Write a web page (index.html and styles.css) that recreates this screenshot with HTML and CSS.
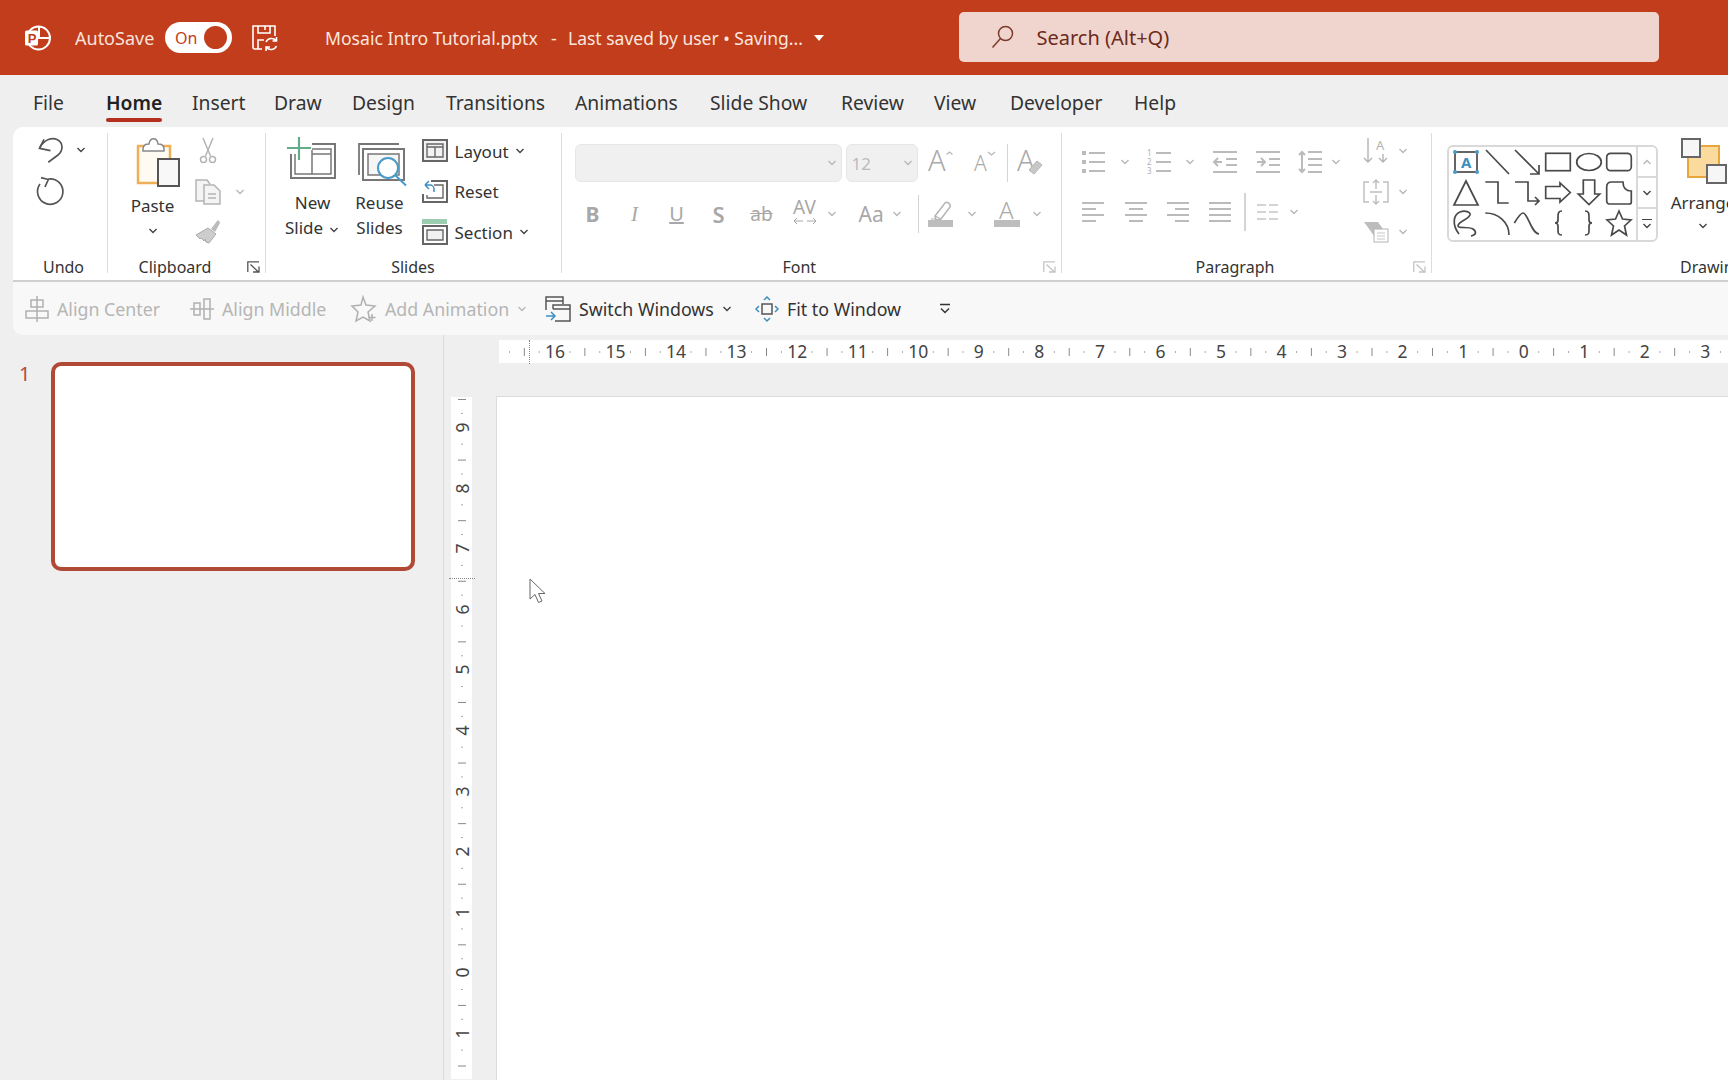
FILE: index.html
```html
<!DOCTYPE html>
<html lang="en">

<head>
    <meta charset="UTF-8">
    <title>Mosaic Intro Tutorial.pptx</title>
    <link rel="stylesheet" href="styles.css">
</head>

<body>
    <svg class="sprite" width="0" height="0">
        <symbol id="chev" viewBox="0 0 12 8"><path d="M2.5 2l3.5 3.5L9.5 2" fill="none" stroke="currentColor" stroke-width="1.4"/></symbol>
        <symbol id="launch" viewBox="0 0 13 12"><path d="M.8 11V.8H12M3.5 3.5l8 7.5M6 11h6V5.5" fill="none" stroke="currentColor" stroke-width="1.3"/></symbol>
        <symbol id="lines-left" viewBox="0 0 24 24"><path d="M1 3h22M1 9h14M1 15h22M1 21h14" fill="none" stroke="currentColor" stroke-width="2"/></symbol>
        <symbol id="lines-center" viewBox="0 0 24 24"><path d="M1 3h22M5 9h14M1 15h22M5 21h14" fill="none" stroke="currentColor" stroke-width="2"/></symbol>
        <symbol id="lines-right" viewBox="0 0 24 24"><path d="M1 3h22M9 9h14M1 15h22M9 21h14" fill="none" stroke="currentColor" stroke-width="2"/></symbol>
        <symbol id="lines-full" viewBox="0 0 24 24"><path d="M1 3h22M1 9h22M1 15h22M1 21h22" fill="none" stroke="currentColor" stroke-width="2"/></symbol>
    </svg>

    <header class="titlebar">
        <svg class="logo" width="26" height="26" viewBox="0 0 26 26">
            <circle cx="13.5" cy="13" r="11.5" fill="none" stroke="#fff" stroke-width="2"/>
            <path d="M14 1.5V13h11" fill="none" stroke="#fff" stroke-width="2"/>
            <rect x="0" y="5.5" width="13" height="15" rx="1.5" fill="#fff"/>
            <text x="2.8" y="17.5" class="logo-p">P</text>
        </svg>
        <span class="autosave">AutoSave</span>
        <span class="toggle"><span>On</span><i></i></span>
        <svg class="saveicon" width="26" height="26" viewBox="0 0 26 26" fill="none" stroke="#fff" stroke-width="1.6">
            <path d="M10 24H3a2 2 0 0 1-2-2V1h22v10"/>
            <path d="M6 1v7h12V1M13 1v4M6 24v-9h6"/>
            <path d="M14 17a6 6 0 0 1 10-1.5M24.5 21a6 6 0 0 1-10 1.5M24.5 12v4h-4M14 26v-4h4"/>
        </svg>
        <span class="docname">Mosaic Intro Tutorial.pptx</span>
        <span class="docdash">-</span>
        <span class="docstate">Last saved by user • Saving...</span>
        <span class="caret"></span>
        <div class="search">
            <svg width="24" height="24" viewBox="0 0 24 24" fill="none" stroke="#7c3a2a" stroke-width="1.5">
                <circle cx="14.5" cy="8.5" r="7"/>
                <path d="M9.5 13.5L1.5 22.5"/>
            </svg>
            <span>Search (Alt+Q)</span>
        </div>
    </header>

    <nav class="tabs">
        <a>File</a>
        <a class="valgt">Home</a>
        <a>Insert</a>
        <a>Draw</a>
        <a>Design</a>
        <a>Transitions</a>
        <a>Animations</a>
        <a>Slide Show</a>
        <a>Review</a>
        <a>View</a>
        <a>Developer</a>
        <a>Help</a>
    </nav>

    <section class="ribbon">
        <div class="group undo">
            <div class="body undo-body">
                <div class="undo-row">
                    <svg width="26" height="28" viewBox="0 0 26 28" fill="none" stroke="#555" stroke-width="1.7">
                        <path d="M7 3.3L2.5 12.3l11 2.4"/>
                        <path d="M3 11C8 3 15 1.5 20 3.5c7 3.5 6 11.5 1 15.5L11.3 26.3"/>
                    </svg>
                    <svg class="chev dark"><use href="#chev"/></svg>
                </div>
                <svg class="redo" width="28" height="28" viewBox="0 0 28 28" fill="none" stroke="#555" stroke-width="1.7">
                    <path d="M12.3 2A12.7 12.7 0 1 1 4 7"/>
                    <path d="M5 .7L12.3 2.5 9 10"/>
                </svg>
            </div>
            <div class="label">Undo</div>
        </div>

        <div class="group clipboard">
            <div class="body clip-body">
                <div class="big paste">
                    <svg width="60" height="57" viewBox="0 0 60 57">
                        <rect x="15" y="13" width="32" height="37" fill="#fffaf2" stroke="#eeb057" stroke-width="2.5"/>
                        <path d="M20 16c0-4 3-5 6-5 1-7 8-7 9 0 3 0 6 1 6 5v2H20z" fill="#fff" stroke="#888" stroke-width="1.5"/>
                        <rect x="35" y="26" width="21" height="27" fill="#f8f8f8" stroke="#555" stroke-width="2"/>
                    </svg>
                    <span>Paste</span>
                    <svg class="chev dark"><use href="#chev"/></svg>
                </div>
                <div class="stack clip-tools">
                    <svg width="26" height="26" viewBox="0 0 26 26" fill="none" stroke="#b4b4b4" stroke-width="1.5">
                        <path d="M8 0l7.5 18M18 0l-7.5 18"/>
                        <circle cx="8.5" cy="21.5" r="3"/>
                        <circle cx="17.5" cy="21.5" r="3"/>
                    </svg>
                    <div class="copy-row">
                        <svg width="26" height="26" viewBox="0 0 26 26" fill="#f4f4f4" stroke="#b4b4b4" stroke-width="1.5">
                            <path d="M9 22H1V1h11l3 4"/>
                            <path d="M9 6h10l6 6v13H9z"/>
                            <path d="M13 15h8M13 19h8"/>
                        </svg>
                        <svg class="chev"><use href="#chev"/></svg>
                    </div>
                    <svg width="26" height="26" viewBox="0 0 26 26">
                        <path d="M16 10l6-8c1-1 3 0 3 2l-5 9z" fill="#bbb"/>
                        <path d="M13 9l8 6-7 9-3-1-1-3-1 2-3-3-1 1-4-4z" fill="#cdcdcd" stroke="#aaa"/>
                    </svg>
                </div>
            </div>
            <div class="label">Clipboard</div>
            <svg class="launch"><use href="#launch"/></svg>
        </div>

        <div class="group slides">
            <div class="body slides-body">
                <div class="big">
                    <svg width="60" height="57" viewBox="0 0 60 57" fill="none">
                        <path d="M8 21V45H52V11H29" stroke="#777" stroke-width="2"/>
                        <path d="M12 21V41H48V16H29M29 17V41M29 21H48" stroke="#777" stroke-width="1.5"/>
                        <path d="M16 4v23M4 15h24" stroke="#62ad8a" stroke-width="2.2"/>
                    </svg>
                    <span class="newslide">New<br>Slide<svg class="chev dark"><use href="#chev"/></svg></span>
                </div>
                <div class="big">
                    <svg width="60" height="57" viewBox="0 0 60 57" fill="none">
                        <path d="M9 42V11H49" stroke="#777" stroke-width="1.8"/>
                        <path d="M13 47V16H54V47z" stroke="#777" stroke-width="2"/>
                        <path d="M18 42V21H49V42z" fill="#f6f6f6" stroke="#777" stroke-width="1.5"/>
                        <circle cx="38" cy="35" r="10" fill="#fff" stroke="#4a9ac9" stroke-width="2"/>
                        <path d="M45 42l11 10.5" stroke="#4a9ac9" stroke-width="2"/>
                    </svg>
                    <span>Reuse<br>Slides</span>
                </div>
                <div class="stack slide-tools">
                    <div class="tool">
                        <svg width="26" height="24" viewBox="0 0 26 24" fill="#f2f2f2" stroke="#666">
                            <rect x="1" y="1" width="24" height="21" stroke-width="2"/>
                            <path d="M5 5h16v13H5zM5 8h16M13 8v10" stroke-width="1.4"/>
                        </svg>
                        <span>Layout</span><svg class="chev dark"><use href="#chev"/></svg>
                    </div>
                    <div class="tool">
                        <svg width="26" height="24" viewBox="0 0 26 24" fill="none" stroke="#666">
                            <path d="M9 1h16v21H1v-8" stroke-width="2"/>
                            <path d="M12 5h9v13H5v-3" stroke-width="1.4"/>
                            <path d="M3 5l4-4M3 5l4 4M3 5h5a4 4 0 0 1 4 4v3" stroke="#3d8fc0" stroke-width="1.5"/>
                        </svg>
                        <span>Reset</span>
                    </div>
                    <div class="tool">
                        <svg width="26" height="26" viewBox="0 0 26 26" fill="none" stroke="#666">
                            <rect x="0" y="0" width="25" height="5" fill="#9bcdb0" stroke="none"/>
                            <path d="M1 7h24v18H1z" stroke-width="2"/>
                            <path d="M5 11h16v10H5z" fill="#f2f2f2" stroke-width="1.4"/>
                        </svg>
                        <span>Section</span><svg class="chev dark"><use href="#chev"/></svg>
                    </div>
                </div>
            </div>
            <div class="label">Slides</div>
        </div>

        <div class="group font">
            <div class="body">
                <div class="font-row1">
                    <div class="select fontname"><svg class="chev"><use href="#chev"/></svg></div>
                    <div class="select fontsize"><span>12</span><svg class="chev"><use href="#chev"/></svg></div>
                    <svg width="26" height="26" viewBox="0 0 26 26" fill="none" stroke="#b8b8b8" stroke-width="1.3">
                        <text x="0" y="21" class="lightA big-a">A</text>
                        <path d="M18.5 4.5L21.5 2l3 2.5"/>
                    </svg>
                    <svg width="26" height="26" viewBox="0 0 26 26" fill="none" stroke="#b8b8b8" stroke-width="1.3">
                        <text x="0" y="21" class="lightA small-a">A</text>
                        <path d="M14 2l3.5 3L21 2"/>
                    </svg>
                    <span class="sep"></span>
                    <svg width="26" height="26" viewBox="0 0 26 26">
                        <text x="0" y="21" class="lightA big-a">A</text>
                        <path d="M12 20l8-9 5 4-8 9z" fill="#c8c8c8" stroke="#b4b4b4"/>
                    </svg>
                </div>
                <div class="font-row2">
                    <span class="fmt bold">B</span>
                    <span class="fmt ital">I</span>
                    <span class="fmt under">U</span>
                    <span class="fmt shadow">S</span>
                    <span class="fmt strike">ab</span>
                    <span class="fmt av">AV<svg width="24" height="8" viewBox="0 0 24 8" fill="none" stroke="currentColor"><path d="M1 4h9M1 4l3-3M1 4l3 3M14 4h9M23 4l-3-3M23 4l-3 3"/></svg></span>
                    <svg class="chev"><use href="#chev"/></svg>
                    <span class="fmt case">Aa</span>
                    <svg class="chev"><use href="#chev"/></svg>
                    <span class="sep row2sep"></span>
                    <svg width="26" height="28" viewBox="0 0 26 28" fill="none" stroke="#b4b4b4" stroke-width="1.5">
                        <path d="M7 16L17 3c2-2 6 1 5 4L13 19l-5 1z"/>
                        <path d="M7 16l6 3M3 19h5" stroke-width="1.2"/>
                        <rect x="0" y="20" width="25" height="7" fill="#bdbdbd" stroke="none"/>
                    </svg>
                    <svg class="chev"><use href="#chev"/></svg>
                    <svg width="26" height="28" viewBox="0 0 26 28">
                        <text x="5" y="19" class="lightA color-a">A</text>
                        <rect x="0" y="20" width="26" height="7" fill="#bdbdbd"/>
                    </svg>
                    <svg class="chev"><use href="#chev"/></svg>
                </div>
            </div>
            <div class="label">Font</div>
            <svg class="launch faint"><use href="#launch"/></svg>
        </div>

        <div class="group paragraph">
            <div class="body para-body">
                <div>
                    <div class="para-row1">
                        <svg class="para-icon" viewBox="0 0 24 24" fill="none" stroke="#bbb" stroke-width="2"><path d="M8 3h16M8 12h16M8 21h16"/><path d="M1 3h4M1 12h4M1 21h4" stroke-width="4"/></svg>
                        <svg class="chev"><use href="#chev"/></svg>
                        <svg class="para-icon" viewBox="0 0 24 24" fill="none" stroke="#bbb" stroke-width="2"><path d="M9 3h15M9 12h15M9 21h15"/><text x="0" y="6" class="listnum">1</text><text x="0" y="15" class="listnum">2</text><text x="0" y="24" class="listnum">3</text></svg>
                        <svg class="chev"><use href="#chev"/></svg>
                        <svg class="para-icon" viewBox="0 0 24 24" fill="none" stroke="#bbb" stroke-width="2"><path d="M0 2h24M13 9h11M13 15h11M0 22h24M9 12H1M5 8l-4 4 4 4"/></svg>
                        <svg class="para-icon" viewBox="0 0 24 24" fill="none" stroke="#bbb" stroke-width="2"><path d="M0 2h24M13 9h11M13 15h11M0 22h24M1 12h8M5 8l4 4-4 4"/></svg>
                        <svg class="para-icon" viewBox="0 0 24 24" fill="none" stroke="#bbb" stroke-width="2"><path d="M10 2h14M10 9h14M10 15h14M10 22h14M4 2v20M1 5l3-3 3 3M1 19l3 3 3-3"/></svg>
                        <svg class="chev"><use href="#chev"/></svg>
                    </div>
                    <div class="para-row2">
                        <svg class="para-icon" color="#bbb"><use href="#lines-left"/></svg>
                        <svg class="para-icon" color="#bbb"><use href="#lines-center"/></svg>
                        <svg class="para-icon" color="#bbb"><use href="#lines-right"/></svg>
                        <svg class="para-icon" color="#bbb"><use href="#lines-full"/></svg>
                        <span class="sep row2sep"></span>
                        <svg class="para-icon cols" viewBox="0 0 24 24" fill="none" stroke="#c6c6c6" stroke-width="1.6"><path d="M2 5h9M14 5h9M2 12h9M14 12h9M2 19h9M14 19h9"/></svg>
                        <svg class="chev"><use href="#chev"/></svg>
                    </div>
                </div>
                <div class="stack para-tools">
                    <div class="copy-row">
                        <svg width="26" height="26" viewBox="0 0 26 26" fill="none" stroke="#b4b4b4" stroke-width="1.4"><path d="M5 0v24M1 20l4 4 4-4M20 16v8M16 20l4 4 4-4"/><text x="13" y="12" class="dirA">A</text></svg>
                        <svg class="chev"><use href="#chev"/></svg>
                    </div>
                    <div class="copy-row">
                        <svg width="26" height="26" viewBox="0 0 26 26" fill="none" stroke="#c0c0c0" stroke-width="1.5"><path d="M6 3H1v20h5M20 3h5v20h-5M13 1v9M10 4l3-3 3 3M13 25v-9M10 22l3 3 3-3M7 13h12"/></svg>
                        <svg class="chev"><use href="#chev"/></svg>
                    </div>
                    <div class="copy-row">
                        <svg width="26" height="26" viewBox="0 0 26 26"><path d="M1 3h14l5 7-8 8z" fill="#bdbdbd"/><rect x="11" y="10" width="14" height="13" fill="#fff" stroke="#b4b4b4"/><path d="M14 14h8M14 17h8M14 20h8" stroke="#c6c6c6"/></svg>
                        <svg class="chev"><use href="#chev"/></svg>
                    </div>
                </div>
            </div>
            <div class="label">Paragraph</div>
            <svg class="launch faint"><use href="#launch"/></svg>
        </div>

        <div class="group drawing">
            <div class="body drawing-body">
                <div class="gallery">
                    <div class="shapes">
                        <svg viewBox="0 0 26 26"><rect x="2" y="3" width="22" height="20"/><text x="8" y="19" class="shapeA">A</text><g class="handles"><circle cx="2" cy="3" r="2"/><circle cx="24" cy="3" r="2"/><circle cx="2" cy="23" r="2"/><circle cx="24" cy="23" r="2"/></g></svg>
                        <svg viewBox="0 0 26 26"><path d="M2 1l23 24"/></svg>
                        <svg viewBox="0 0 26 26"><path d="M1 1l24 24M25 16v9h-9"/></svg>
                        <svg viewBox="0 0 26 26"><rect x=".7" y="4.3" width="24.6" height="17.4"/></svg>
                        <svg viewBox="0 0 26 26"><ellipse cx="13" cy="13" rx="12.3" ry="8.5"/></svg>
                        <svg viewBox="0 0 26 26"><rect x=".7" y="4.3" width="24.6" height="17.4" rx="4"/></svg>
                        <svg viewBox="0 0 26 26"><path d="M13 1L1 25h24z"/></svg>
                        <svg viewBox="0 0 26 26"><path d="M1.3 2H14V23H24.7"/></svg>
                        <svg viewBox="0 0 26 26"><path d="M1 2H14V21H25M21 17l4 4-4 4"/></svg>
                        <svg viewBox="0 0 26 26"><path d="M.7 6.5H15V3l10.3 9.5L15 22v-3.5H.7z"/></svg>
                        <svg viewBox="0 0 26 26"><path d="M7.3 0H18.7V14H23.7L13 24.5 2.3 14H7.3z"/></svg>
                        <svg viewBox="0 0 26 26"><path d="M.7 21V7c0-3 2-5 5-5H17c0 6 3 9 8.3 9v11c0 1-1 2-2 2H3c-1 0-2.3-1-2.3-3z"/></svg>
                        <svg viewBox="0 0 26 26"><path d="M6 24C-1 15 0 5 7 2c5-2 11 0 10 3-2 5-12 6-12 11 0 3 10 0 15 3 4 3 3 6-2 7"/></svg>
                        <svg viewBox="0 0 26 26"><path d="M1.3 3C14 3 25 12 25 25"/></svg>
                        <svg viewBox="0 0 26 26"><path d="M.3 13C4 7 7 3 9 3c5 0 8 20 16 21"/></svg>
                        <svg viewBox="0 0 26 26"><path d="M17 1c-4 0-4 3-4 6v3c0 2-1 3-3 3 2 0 3 1 3 3v4c0 3 0 5 4 5"/></svg>
                        <svg viewBox="0 0 26 26"><path d="M9 1c4 0 4 3 4 6v3c0 2 1 3 3 3-2 0-3 1-3 3v4c0 3 0 5-4 5"/></svg>
                        <svg viewBox="0 0 26 26"><path d="M13 1l3.5 8 8.5 1-6.5 6 2 9-7.5-5-7.5 5 2-9L1 10l8.5-1z"/></svg>
                    </div>
                    <div class="scroller">
                        <span><svg class="chev flip"><use href="#chev"/></svg></span>
                        <span><svg class="chev dark"><use href="#chev"/></svg></span>
                        <span class="more"><i></i><svg class="chev dark"><use href="#chev"/></svg></span>
                    </div>
                </div>
                <div class="big arrange">
                    <svg width="60" height="57" viewBox="0 0 60 57">
                        <rect x="15" y="13" width="31" height="31" fill="#fadb9d" stroke="#e8a63c" stroke-width="2"/>
                        <rect x="9" y="6" width="18" height="18" fill="#f6f6f6" stroke="#666" stroke-width="2"/>
                        <rect x="34" y="32" width="19" height="18" fill="#f6f6f6" stroke="#666" stroke-width="2"/>
                    </svg>
                    <span>Arrange</span>
                    <svg class="chev dark"><use href="#chev"/></svg>
                </div>
            </div>
            <div class="label">Drawing</div>
        </div>
    </section>

    <section class="qat">
        <div class="qat-item off">
            <svg width="24" height="26" viewBox="0 0 24 26" fill="none" stroke="#b0b0b0" stroke-width="1.5"><path d="M12 0v26M6 4h12v7H6zM1 15h22v7H1z"/></svg>
            <span>Align Center</span>
        </div>
        <div class="qat-item off">
            <svg width="24" height="26" viewBox="0 0 24 26" fill="none" stroke="#b0b0b0" stroke-width="1.5"><path d="M0 13h24M4 7h6v12H4zM14 3h6v20h-6z"/></svg>
            <span>Align Middle</span>
        </div>
        <div class="qat-item off">
            <svg width="26" height="26" viewBox="0 0 26 26" fill="none" stroke="#b0b0b0" stroke-width="1.5"><path d="M12 1l3 8 9 1-7 6 2 9-7-4-7 4 2-9-6-6 9-1z"/><path d="M21 18v7M17.5 21.5h7"/></svg>
            <span>Add Animation</span>
            <svg class="chev"><use href="#chev"/></svg>
        </div>
        <div class="qat-item">
            <svg width="26" height="26" viewBox="0 0 26 26" fill="none" stroke="#555" stroke-width="1.5"><path d="M1 14V1h17v7M1 5h17"/><path d="M8 13V9h17v16H10M8 13h17"/><path d="M1 20h9M6 16l4 4-4 4" stroke="#3d8fc0"/></svg>
            <span>Switch Windows</span>
            <svg class="chev dark"><use href="#chev"/></svg>
        </div>
        <div class="qat-item">
            <svg width="24" height="26" viewBox="0 0 24 26" fill="none" stroke="#3d8fc0" stroke-width="1.5"><rect x="7" y="8" width="10" height="10" stroke="#555"/><path d="M9 4l3-3 3 3M9 22l3 3 3-3M4 10l-3 3 3 3M20 10l3 3-3 3"/></svg>
            <span>Fit to Window</span>
        </div>
        <svg class="overflow" width="12" height="12" viewBox="0 0 12 12" fill="none" stroke="#333" stroke-width="1.4"><path d="M1 1.5h10M2 5.5l4 4 4-4"/></svg>
    </section>

    <main class="workspace">
        <aside class="thumbs">
            <span class="num">1</span>
            <div class="thumb"></div>
        </aside>
        <div class="editor">
            <div class="ruler-h">
                <span>16</span><span>15</span><span>14</span><span>13</span><span>12</span><span>11</span><span>10</span><span>9</span><span>8</span><span>7</span><span>6</span><span>5</span><span>4</span><span>3</span><span>2</span><span>1</span><span>0</span><span>1</span><span>2</span><span>3</span>
                <i class="marker-h"></i>
            </div>
            <div class="editor-row">
                <div class="ruler-v">
                    <span>9</span><span>8</span><span>7</span><span>6</span><span>5</span><span>4</span><span>3</span><span>2</span><span>1</span><span>0</span><span>1</span>
                    <i class="marker-v"></i>
                </div>
                <div class="slide">
                    <svg class="cursor" width="18" height="26" viewBox="0 0 18 26"><path d="M1 1v20l5-4.5 3.5 8 3.5-1.5-3.5-7.5H16z" fill="#fff" stroke="#666" stroke-width="1"/></svg>
                </div>
            </div>
        </div>
    </main>
</body>

</html>
```

FILE: styles.css
```css
* {
    box-sizing: border-box;
}

html,
body {
    margin: 0;
    width: 1728px;
    height: 1080px;
    overflow: hidden;
}

body {
    background: #efefef;
    color: #333;
    font-family: "Noto Sans", "Open Sans", sans-serif;
    font-size: 17px;
}

svg {
    display: block;
    flex: none;
    overflow: visible;
}

.sprite {
    position: absolute;
}

/* title bar */
.titlebar {
    display: flex;
    align-items: center;
    height: 75px;
    padding-left: 25px;
    background: #c13d1b;
    color: #fff;
    font-size: 18px;
}

.logo-p {
    font: bold 13px "Liberation Sans", sans-serif;
    fill: #c13d1b;
}

.autosave {
    width: 90px;
    margin-left: 24px;
    color: #f9e3dc;
}

.toggle {
    display: flex;
    align-items: center;
    justify-content: space-between;
    width: 67px;
    height: 31px;
    padding: 0 5px 0 10px;
    border-radius: 16px;
    background: #fff;
    color: #c13d1b;
    font-size: 16px;
}

.toggle i {
    width: 23px;
    height: 23px;
    border-radius: 50%;
    background: #c13d1b;
}

.saveicon {
    margin-left: 20px;
}

.docname {
    width: 226px;
    margin-left: 47px;
    color: #fbe6df;
    font-size: 17.6px;
    white-space: nowrap;
}

.docdash {
    width: 17px;
    color: #fbe6df;
}

.docstate {
    width: 246px;
    color: #fbe6df;
    font-size: 17.5px;
    white-space: nowrap;
}

.caret {
    width: 0;
    height: 0;
    border: 5px solid transparent;
    border-top: 6px solid #fff;
    border-bottom: 0;
}

.search {
    display: flex;
    align-items: center;
    gap: 22px;
    width: 700px;
    height: 50px;
    margin-left: 134.5px;
    margin-top: -0.5px;
    padding-left: 32px;
    border-radius: 5px;
    background: #f0d5ce;
    color: #6b2a1c;
    font-size: 20px;
}

/* tabs */
.tabs {
    display: grid;
    grid-template-columns: 73px 86px 82px 78px 94px 129px 135px 131px 93px 76px 124px 60px;
    align-items: center;
    height: 52px;
    padding: 2px 0 0 33px;
    font-size: 19.3px;
}

.tabs a {
    position: relative;
    white-space: nowrap;
    justify-self: start;
}

.valgt {
    font-weight: 600;
    color: #222;
}

.valgt::after {
    content: "";
    position: absolute;
    left: 0;
    right: 0;
    bottom: -6px;
    height: 3.5px;
    border-radius: 2px;
    background: #b5301c;
}

/* ribbon */
.ribbon {
    display: flex;
    height: 155px;
    margin-left: 13px;
    padding-top: 6px;
    overflow: hidden;
    border-top-left-radius: 10px;
    border-bottom: 2px solid #cfd0d0;
    background: #fff;
}

.group {
    position: relative;
    display: flex;
    flex: none;
    flex-direction: column;
    height: 140px;
    border-right: 1.5px solid #dcdcdc;
}

.body {
    flex: 1;
}

.label {
    height: 10px;
    line-height: 8px;
    font-size: 16px;
    text-align: center;
    white-space: nowrap;
}

.launch {
    position: absolute;
    right: 5px;
    bottom: 0;
    width: 13px;
    height: 12px;
    color: #555;
}

.launch.faint {
    color: #c4c4c4;
}

.chev {
    width: 12px;
    height: 8px;
    color: #b8b8b8;
}

.chev.dark {
    color: #444;
}

.chev.flip {
    transform: scaleY(-1);
}

.sep {
    display: block;
    width: 1.5px;
    height: 38px;
    background: #d4d4d4;
}

.big {
    display: flex;
    flex: none;
    flex-direction: column;
    align-items: center;
    width: 60px;
    line-height: 25px;
    text-align: center;
}

.stack {
    display: grid;
    grid-auto-rows: 40.5px;
    align-items: center;
    margin-top: -2px;
}

.tool,
.copy-row {
    display: flex;
    align-items: center;
}

/* undo */
.undo {
    width: 95px;
}

.undo .label {
    padding-left: 7px;
}

.undo-body {
    padding: 3px 0 0 24px;
}

.undo-row {
    display: flex;
    align-items: flex-start;
    gap: 12px;
    height: 41px;
}

.undo-row .chev {
    margin-top: 10px;
}

.redo {
    margin-left: -1px;
}

/* clipboard */
.clipboard {
    width: 157.5px;
}

.clipboard .label {
    width: 134px;
}

.clip-body {
    display: flex;
    padding-left: 14.5px;
}

.paste span {
    margin-top: 2.5px;
}

.paste .chev {
    margin-top: 9px;
}

.clip-tools {
    width: 60px;
    margin-left: 12px;
}

.copy-row {
    gap: 13px;
}

/* slides */
.slides {
    width: 296px;
}

.slides-body {
    display: flex;
    padding-left: 17px;
}

.slides-body .big + .big {
    margin-left: 7px;
}

.newslide .chev {
    display: inline-block;
    margin-left: 5px;
}

.slide-tools {
    margin-left: 12px;
}

.tool {
    gap: 7px;
}

.tool .chev {
    margin-left: -2px;
}

/* font */
.font {
    width: 500.5px;
}

.font .label {
    padding-right: 24px;
}

.font-row1 {
    display: grid;
    grid-template-columns: 271px 82px 46px 33px 10px 26px;
    align-items: center;
    height: 38px;
    margin: 11px 0 0 13px;
}

.select {
    display: flex;
    align-items: center;
    justify-content: flex-end;
    height: 38px;
    padding-right: 3px;
    border: 1.5px solid #e6e6e6;
    border-radius: 6px;
    background: #f0f0f0;
    color: #bbb;
}

.fontname {
    width: 267px;
}

.fontsize {
    justify-content: space-between;
    width: 72px;
    padding-left: 5px;
}

.lightA {
    font-family: "Noto Sans", sans-serif;
    font-weight: 300;
    fill: #aaa;
    stroke: none;
}

.big-a {
    font-size: 29px;
}

.small-a {
    font-size: 21px;
}

.color-a {
    font-size: 24px;
}

.font-row2 {
    display: grid;
    grid-template-columns: 42px 42px 42px 43px 43px 33px 33px 32px 27px 10px 38px 28px 37px 12px;
    align-items: center;
    height: 38px;
    margin: 13px 0 0 19px;
}

.fmt {
    display: block;
    width: 24px;
    color: #a8a8a8;
    font-size: 21px;
    line-height: 24px;
    text-align: center;
}

.bold {
    font-weight: 700;
}

.ital {
    font-family: "Liberation Serif", serif;
    font-style: italic;
}

.under {
    text-decoration: underline;
    font-size: 20px;
}

.shadow {
    font-weight: 600;
    font-size: 22px;
}

.strike {
    text-decoration: line-through;
    font-size: 19px;
}

.av {
    position: relative;
    top: -3px;
    font-size: 19px;
    line-height: 20px;
}

.case {
    font-size: 21px;
}

.row2sep {
    justify-self: start;
}

/* paragraph */
.paragraph {
    width: 370px;
}

.paragraph .label {
    padding-right: 23px;
}

.para-body {
    display: flex;
    padding-left: 19px;
}

.para-icon {
    width: 24px;
    height: 24px;
}

.listnum {
    font: 8px "Noto Sans", sans-serif;
    fill: #b0b0b0;
    stroke: none;
}

.para-row1 {
    display: grid;
    grid-template-columns: 38px 28px 37px 29px 43px 42px 32px 12px;
    align-items: center;
    width: 281px;
    height: 38px;
    margin-top: 10px;
}

.para-row2 {
    display: grid;
    grid-template-columns: 43px 42px 42px 36px 11px 33px 12px;
    align-items: center;
    height: 38px;
    margin-top: 12px;
}

.para-tools {
    margin-left: 1px;
}

.para-tools .copy-row {
    gap: 8px;
}

.dirA {
    font: 13px "Noto Sans", sans-serif;
    fill: #b4b4b4;
    stroke: none;
}

/* drawing */
.drawing {
    width: 300px;
    border-right: 0;
}

.drawing .label {
    width: 296px;
    padding-left: 248px;
    text-align: left;
}

.drawing-body {
    display: flex;
    padding-left: 15px;
}

.gallery {
    display: flex;
    flex: none;
    width: 211px;
    height: 97px;
    margin-top: 12px;
    padding-left: 2px;
    border: 2px solid #d9d9d9;
    border-radius: 6px;
}

.shapes {
    display: grid;
    grid-template-columns: repeat(6, 30.6px);
    grid-auto-rows: 30.5px;
    place-items: center;
    width: 184.6px;
}

.shapes svg {
    width: 26px;
    height: 26px;
    fill: none;
    stroke: #4a4a4a;
    stroke-width: 1.7;
}

.shapes .handles {
    fill: #4a9ac9;
    stroke: none;
}

.shapeA {
    font: bold 15px "Noto Sans", sans-serif;
    fill: #3d8fc0;
    stroke: none;
}

.scroller {
    display: grid;
    grid-template-rows: 31px 31px 1fr;
    flex: 1;
    border-left: 2px solid #d9d9d9;
}

.scroller span {
    display: flex;
    flex-direction: column;
    align-items: center;
    justify-content: center;
    gap: 2px;
    border-bottom: 2px solid #d9d9d9;
}

.scroller .more {
    border-bottom: 0;
}

.more i {
    width: 10px;
    height: 1.5px;
    background: #444;
}

.arrange {
    width: 64px;
    margin-left: 13px;
}

.arrange .chev {
    margin-top: 7px;
}

/* quick access bar */
.qat {
    display: grid;
    grid-template-columns: 165px 161px 194px 210px 183.5px 12px;
    align-items: center;
    height: 53px;
    margin-left: 13px;
    padding-left: 12px;
    border-bottom-left-radius: 10px;
    background: #f8f8f8;
    font-size: 17.8px;
}

.qat-item {
    display: flex;
    align-items: center;
    gap: 8px;
    white-space: nowrap;
}

.qat-item.off {
    color: #b5b5b5;
}

.qat-item .chev {
    margin-left: -1px;
}

/* workspace */
.workspace {
    display: flex;
    height: 745px;
}

.thumbs {
    display: flex;
    width: 444px;
    padding: 27px 0 0 19px;
    border-right: 1.5px solid #dadada;
}

.num {
    width: 32px;
    color: #b5493a;
    font-size: 20px;
    line-height: 24px;
}

.thumb {
    width: 364px;
    height: 209px;
    border: 4.5px solid #b04a36;
    border-radius: 10px;
    background: #fff;
}

.editor {
    flex: 1;
    min-width: 0;
}

.ruler-h {
    position: relative;
    display: flex;
    width: 1229px;
    height: 23px;
    margin: 5px 0 33px 55px;
    padding-left: 25.7px;
    background:
        linear-gradient(to right, transparent 10px, #aaa 10px, #aaa 11px, transparent 11px, transparent 39.5px, #aaa 39.5px, #aaa 40.5px, transparent 40.5px) 0 center / 60.55px 2px repeat-x,
        linear-gradient(to right, transparent 24.5px, #888 24.5px, #888 25.5px, transparent 25.5px) 0 center / 60.55px 8px repeat-x,
        #fff;
    color: #444;
    font-size: 17.5px;
    line-height: 23px;
}

.ruler-h span {
    flex: none;
    width: 60.55px;
    text-align: center;
}

.marker-h {
    position: absolute;
    left: 30px;
    top: 0;
    height: 24px;
    border-left: 1px dotted #888;
}

.editor-row {
    display: flex;
}

.ruler-v {
    position: relative;
    display: flex;
    flex-direction: column;
    width: 21px;
    height: 682px;
    margin: 1px 0 0 7px;
    background:
        linear-gradient(to bottom, transparent 16px, #aaa 16px, #aaa 17px, transparent 17px, transparent 47px, #aaa 47px, #aaa 48px, transparent 48px) center 0 / 2px 60.6px repeat-y,
        linear-gradient(to bottom, transparent 2px, #888 2px, #888 3px, transparent 3px) center 0 / 8px 60.6px repeat-y,
        #fff;
    color: #444;
    font-size: 17.5px;
}

.ruler-v span {
    display: flex;
    flex: none;
    align-items: center;
    justify-content: center;
    height: 60.6px;
    writing-mode: vertical-rl;
    transform: rotate(180deg);
}

.marker-v {
    position: absolute;
    left: -2px;
    top: 181px;
    width: 26px;
    border-top: 1px dotted #888;
}

.slide {
    position: relative;
    flex: 1;
    height: 690px;
    margin-left: 24px;
    border-top: 1px solid #dcdcdc;
    border-left: 1px solid #dcdcdc;
    background: #fff;
}

.cursor {
    position: absolute;
    left: 32px;
    top: 181px;
}
```
